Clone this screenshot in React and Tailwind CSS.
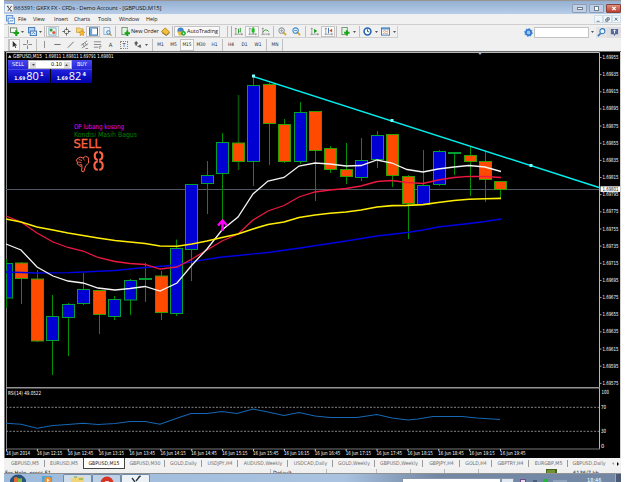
import clsx from 'clsx';

const MENU = [
    ['File', 'w-[15px]'],
    ['View', 'w-[21px]'],
    ['Insert', 'w-[20px]'],
    ['Charts', 'w-[24px]'],
    ['Tools', 'w-[21px]'],
    ['Window', 'w-[27px]'],
    ['Help', 'w-[20px]'],
];

const TIMEFRAMES = [
    ['M1', 'w-[13px]'],
    ['M5', 'w-[13px]'],
    ['M15', 'w-[14px]'],
    ['M30', 'w-[14px]'],
    ['H1', 'w-[13px]'],
    ['|', 'w-[3px]'],
    ['H4', 'w-[14px]'],
    ['D1', 'w-[13px]'],
    ['W1', 'w-[14px]'],
    ['|', 'w-[3px]'],
    ['MN', 'w-[14px]'],
];

const TABS = [
    ['GBPUSD,M5', 'w-[40px]'],
    ['EURUSD,M5', 'w-[38px]'],
    ['GBPUSD,M15', 'w-[42px]'],
    ['GBPUSD,M30', 'w-[40px]'],
    ['GOLD,Daily', 'w-[37px]'],
    ['USDJPY,H4', 'w-[36px]'],
    ['AUDUSD,Weekly', 'w-[50px]'],
    ['USDCAD,Daily', 'w-[45px]'],
    ['GOLD,Weekly', 'w-[42px]'],
    ['GBPUSD,Weekly', 'w-[48px]'],
    ['GBPJPY,H4', 'w-[37px]'],
    ['GOLD,H4', 'w-[32px]'],
    ['GBPTRY,H4', 'w-[37px]'],
    ['EURGBP,M5', 'w-[39px]'],
    ['GBPUSD,Daily', 'w-[42px]'],
];

// high, low, body top, body bottom, direction
const CANDLES = [
    [259, 308, 263.5, 298, 'up'],
    [262, 304, 263, 278.5, 'down'],
    [270, 342, 279, 341, 'down'],
    [295, 375, 316.5, 340.5, 'up'],
    [303, 356, 304.5, 317.5, 'up'],
    [273, 305, 289.5, 303.5, 'up'],
    [290, 334, 290.5, 314.5, 'down'],
    [296, 320, 299.5, 316.5, 'up'],
    [279, 315, 280.5, 300, 'up'],
    [263, 302, 278.5, 279.5, 'flat'],
    [271, 320, 276, 312.5, 'down'],
    [239.5, 316, 248.5, 313.5, 'up'],
    [184, 281, 184.5, 249.5, 'up'],
    [161, 214, 175.5, 183.5, 'up'],
    [133, 220, 142.5, 173.5, 'up'],
    [95, 170, 143, 161.5, 'down'],
    [76, 186, 85.5, 161.5, 'up'],
    [83, 165, 84.5, 123.5, 'down'],
    [119, 163, 124.5, 161.5, 'down'],
    [102, 164, 112.5, 161.5, 'up'],
    [111, 201, 111.5, 150.5, 'down'],
    [146, 173, 148.5, 169.5, 'down'],
    [143, 184, 169.5, 176.5, 'down'],
    [138, 181, 160.5, 177.5, 'up'],
    [131, 168, 135.5, 159.5, 'up'],
    [134, 187, 134.5, 175.5, 'down'],
    [175, 239, 176.5, 203.5, 'down'],
    [150, 205, 185.5, 204.5, 'up'],
    [150, 186, 151.5, 184.5, 'up'],
    [152, 175, 152.5, 153.5, 'flat'],
    [146, 196, 155.5, 161.5, 'down'],
    [151, 202, 161.5, 179.5, 'down'],
    [181, 198, 181.5, 189.5, 'down'],
];

const FILLS = { up: '#0000d2', down: '#ff4a00', flat: '#00a000' };

const WHITE_MA = '6,244 21,250 37,267 53,276 68,281 83,283 98,288 115,290 130,288.5 145,286.5 160,291 177,283 192,265 207,249 222,230 238,217 253,194 268,181 284,177.5 299,166 315,163 330,164 346,166 361,165.5 377,160 392,163 407,169.5 423,172 438,169 454,167 469,165.5 485,167 501,171.5';
const RED_MA = '6,216 21,222 37,233 53,242 68,247.5 83,251 98,257.5 115,261.5 130,263.5 145,264.5 160,269 177,267 192,259 207,250 222,241 238,234 253,220 268,211 284,205.5 299,197 315,192 330,190 346,188.5 361,186 377,181.5 392,180.5 407,182.5 423,183.5 438,180 454,177.5 469,176.3 485,176.5 501,177.5';
const YELLOW_MA = '6,219 21,222 37,227 53,230 68,233 83,235.5 98,238 115,240.5 130,242 145,243.5 160,246 177,246.3 192,244 207,241 222,237.5 238,234 253,229 268,224.5 284,222 299,217.5 315,215 330,213.3 346,212 361,210 377,207 392,205.6 407,205.4 423,204.6 438,202.5 454,200.5 469,199.3 485,198.7 501,198.4';
const BLUE_MA = '6,272 37,273 68,272.7 83,272 115,270.5 145,267.5 177,265 192,261.7 222,257 238,255.5 268,252.5 300,248 346,241 377,236 407,232.5 423,230 438,227 469,223.5 485,221.5 501,219';
const RSI = '6,423.3 21,424.3 37,428.3 53,425.5 68,424.5 83,423.3 98,424.5 115,423.5 130,421.5 145,421.5 160,424.3 176,418.5 191,413.5 207,413.5 222,411.5 237,413.5 253,409 268,412 284,415.5 299,412.5 315,416 330,417.5 357,417.5 377,414.5 392,418 408,420 418,419 433,416.5 462,416.5 477,418 500,419.5';

const TIMES = [
    '2014', '12:15', '12:45', '13:15', '13:45', '14:15', '14:45', '15:15', '15:45',
    '16:15', '16:45', '17:15', '17:45', '18:15', '18:45', '19:15', '19:45',
];

const PRICES = Array.from({ length: 20 }, (_, i) => (1.69955 - i * 0.0002).toFixed(5));

const Glyph = ({ children, className }) => (
    <svg viewBox="0 0 10 10" fill="none" className={clsx('w-[9px] h-[9px] shrink-0', className)}>
        {children}
    </svg>
);

const Cell = ({ w, on, children }) => (
    <div className={clsx('h-full flex items-center justify-center shrink-0', w, on && 'bg-[#f9f9f9] border border-[#c4c4c4]')}>
        {children}
    </div>
);

const Sep = () => (
    <div className="w-[3px] h-full flex justify-center shrink-0">
        <div className="w-px h-full bg-[#bdbdbd]" />
    </div>
);

const Caret = ({ w }) => (
    <div className={clsx('h-full flex items-center justify-center shrink-0', w)}>
        <svg viewBox="0 0 4 2" className="w-[3px] h-[2px]"><path d="M0 0H4L2 2Z" fill="#222" /></svg>
    </div>
);

// label squeezed or stretched to a fixed width
const Label = ({ children, ...props }) => (
    <text lengthAdjust="spacingAndGlyphs" xmlSpace="preserve" {...props}>{children}</text>
);

const Magnifier = ({ color, sign }) => (
    <Glyph>
        <path d="M6 6L9 9" stroke="#d9a520" strokeWidth="1.8" />
        <circle cx="4" cy="4" r="3" fill="#e4f2fb" stroke={color} strokeWidth="1.2" />
        <path d={sign === '+' ? 'M2.4 4H5.6M4 2.4V5.6' : 'M2.4 4H5.6'} stroke={color} />
    </Glyph>
);

const Axes = ({ children }) => (
    <Glyph>
        <path d="M2 1V9M0.5 8H9.5M1 2.5L2 1L3 2.5M8 7L9.5 8L8 9" stroke="#888" strokeWidth="0.8" />
        {children}
    </Glyph>
);

const TitleBar = () => (
    <div className="h-[14px] flex items-start border-t border-[#9b9390] bg-gradient-to-b from-[#94afd2] to-[#b8cee8]">
        <div className="w-[8px] h-[8px] mt-[3px] ml-px bg-[#eef2f6] flex items-center justify-center">
            <svg viewBox="0 0 8 8" className="w-[7px] h-[7px]" fill="none">
                <path d="M1.5 1.5L6 6.8M6.5 1L2 7M1 1.5H3M5 6.8H7" stroke="#333" />
            </svg>
        </div>
        <span className="ml-px mt-[2px] leading-[10px] text-[5.9px] tracking-[-0.16px] text-[#10151d] whitespace-nowrap w-[150px] font-['Open_Sans']">
            663391: GKFX FX - CFDs - Demo Account - [GBPUSD,M15]
        </span>
        <div className="flex-1" />
        <div className="flex gap-[2px] mt-[3px]">
            <div className="w-[15px] h-[9px] rounded-[1px] border border-[#8d9db3] bg-[#bfd0e5] flex items-center justify-center">
                <div className="w-[6px] h-[3px] border border-[#6f7c8f] bg-white" />
            </div>
            <div className="w-[15px] h-[9px] rounded-[1px] border border-[#8d9db3] bg-[#bfd0e5] flex items-center justify-center">
                <div className="w-[5px] h-[5px] border border-[#6f7c8f] bg-white" />
            </div>
            <div className="w-[15px] h-[9px] rounded-[1px] border border-[#8a4037] bg-gradient-to-b from-[#dc8e80] to-[#bd3f2c] flex items-center justify-center">
                <svg viewBox="0 0 6 6" className="w-[6px] h-[5px]"><path d="M1 1L5 5M5 1L1 5" stroke="#fff" strokeWidth="1.5" /></svg>
            </div>
        </div>
    </div>
);

const MenuBar = () => (
    <div className="h-[11px] flex items-center bg-[#f1f1f1] border-b border-[#cfcfcf]">
        <div className="w-[14px] flex justify-center pr-[2px]">
            <Glyph className="w-[8px] h-[8px]">
                <rect x="0.5" y="0.5" width="7" height="6" fill="#cfe2f6" stroke="#5c91cf" />
                <rect x="2.5" y="3.5" width="7" height="6" fill="#fff" stroke="#5c91cf" />
                <path d="M4 8L5 6L7 7L8 5" stroke="#4384c9" />
            </Glyph>
        </div>
        {MENU.map(([label, w]) => (
            <span key={label} className={clsx("text-[5.5px] leading-[9px] tracking-[-0.1px] text-[#1a1a1a] font-['Open_Sans']", w)}>{label}</span>
        ))}
        <div className="flex-1" />
        <div className="flex h-[8px] text-[#51657c]">
            {['M1 6H5', 'M1 3H4V6H1ZM3 3V1H6V4H4', 'M1 1L5 5M5 1L1 5'].map((d) => (
                <div key={d} className="w-[9px] border border-[#cfdfe8] bg-[#f0f6fa] flex items-center justify-center">
                    <svg viewBox="0 0 7 7" fill="none" className="w-[5px] h-[5px]"><path d={d} stroke="currentColor" strokeWidth="1.2" /></svg>
                </div>
            ))}
        </div>
    </div>
);

const MainToolbar = () => (
    <div className="h-[13px] pt-px flex items-center bg-[#f0f0f0]">
        <div className="flex h-[12px] w-[394px] border-b border-r border-[#d0d0d0]">
            <div className="w-[4px]" />
            <div className="w-px h-full bg-[#c4c4c4]" />
            <Cell w="w-[11px]">
                <Glyph>
                    <rect x="0.5" y="1" width="7" height="5" fill="#f4fff4" stroke="#667b66" />
                    <path d="M7 3.5V10M4 6.7H10" stroke="#16a316" strokeWidth="2.4" />
                </Glyph>
            </Cell>
            <Caret w="w-[5px]" />
            <div className="w-[2px]" />
            <Cell w="w-[10px]">
                <Glyph>
                    <rect x="0.5" y="0.5" width="7" height="6" fill="#b8d3ef" stroke="#3c76b5" />
                    <rect x="2.5" y="4.5" width="7" height="5" fill="#dbeaf8" stroke="#3c76b5" />
                    <path d="M4 8L6 6L8 8" stroke="#4a90d0" />
                </Glyph>
            </Cell>
            <Caret w="w-[6px]" />
            <Sep />
            <Cell w="w-[13px]" on>
                <Glyph>
                    <rect x="1" y="1" width="8" height="8" fill="#e6f5f2" stroke="#7dabc8" />
                    <circle cx="3.5" cy="3.5" r="1.5" fill="#28a428" />
                    <circle cx="6.5" cy="6.2" r="1.8" fill="#db6042" />
                </Glyph>
            </Cell>
            <Cell w="w-[15px]">
                <Glyph>
                    <circle cx="5" cy="5" r="2.6" stroke="#777" />
                    <path d="M5 0.5V3.5M5 6.5V9.5M0.5 5H3.5M6.5 5H9.5" stroke="#555" />
                </Glyph>
            </Cell>
            <Cell w="w-[12px]">
                <Glyph>
                    <path d="M0.5 1H4L5 2H8V6H0.5Z" fill="#f7d67a" stroke="#c98f21" strokeWidth="0.7" />
                    <path d="M6.5 3.5L7.5 5.5L9.8 5.8L8 7.3L8.5 9.6L6.5 8.4L4.5 9.6L5 7.3L3.2 5.8L5.5 5.5Z" fill="#ffbd32" stroke="#c88614" strokeWidth="0.7" />
                </Glyph>
            </Cell>
            <Cell w="w-[14px]" on>
                <Glyph>
                    <rect x="0.5" y="1" width="9" height="8" fill="#fff" stroke="#2867aa" strokeWidth="1.2" />
                    <rect x="1" y="2" width="2.5" height="7" fill="#69a5dc" />
                </Glyph>
            </Cell>
            <Cell w="w-[14px]">
                <Glyph>
                    <rect x="1" y="0.5" width="6.5" height="8" fill="#eef5fb" stroke="#8fb0cf" />
                    <circle cx="6" cy="6" r="2" fill="#d5ecfb" stroke="#3e7fb7" />
                    <path d="M7.5 7.5L9.5 9.5" stroke="#bb9030" strokeWidth="1.3" />
                </Glyph>
            </Cell>
            <Sep />
            <div className="flex items-center h-full w-[42px] pl-[4px] text-[5.5px] tracking-[-0.05px] font-['Open_Sans'] font-medium whitespace-nowrap text-[#101010]">
                <Glyph className="mr-[1px]">
                    <rect x="1" y="0.5" width="6" height="8" fill="#e7f5e7" stroke="#709070" />
                    <path d="M7 4V10M4 7H10" stroke="#15a515" strokeWidth="2.2" />
                </Glyph>
                New Order
            </div>
            <Cell w="w-[12px]">
                <Glyph>
                    <path d="M0.5 5L4.5 1L9.5 5.5L6 9Z" fill="#f2bf3d" stroke="#ba841b" />
                    <path d="M1 6.2L6 9.5L9.5 6.5" stroke="#8b6725" />
                </Glyph>
            </Cell>
            <Sep />
            <div className="flex items-center h-full w-[46px] pl-[2px] text-[5.4px] font-['Open_Sans'] font-medium whitespace-nowrap text-[#101010] bg-[#f9f9f9] border border-[#c4c4c4]">
                <Glyph className="mr-[1px]">
                    <circle cx="4" cy="4" r="3.5" fill="#4285c8" />
                    <path d="M0.5 5H7L6 9.5H2Z" fill="#e8b844" />
                    <circle cx="7.2" cy="7" r="2.6" fill="#1eb030" />
                    <path d="M6.5 5.7L8.5 7L6.5 8.3Z" fill="#fff" />
                </Glyph>
                AutoTrading
            </div>
            <div className="w-[6px]" />
            <Sep />
            <div className="w-[2px]" />
            <div className="w-px bg-[#aaa]" />
            <Cell w="w-[13px]"><Axes><path d="M5 2V7M7 1V6M5 5H6" stroke="#249b24" /></Axes></Cell>
            <Cell w="w-[14px]" on><Axes><path d="M5.7 0V8" stroke="#109010" /><rect x="4" y="1.5" width="3.4" height="4.5" fill="#22bd22" /></Axes></Cell>
            <Cell w="w-[13px]"><Axes><path d="M2 6Q5 1 8.5 5" stroke="#249b24" /></Axes></Cell>
            <Sep />
            <Cell w="w-[14px]"><Magnifier color="#9a9a9a" sign="+" /></Cell>
            <Cell w="w-[14px]"><Magnifier color="#3e89c9" sign="-" /></Cell>
            <div className="w-px" />
            <Sep />
            <Cell w="w-[14px]"><Axes><path d="M4.5 2L8 4.5L4.5 7Z" fill="#18a018" /></Axes></Cell>
            <Cell w="w-[14px]" on><Axes><path d="M5 1V7" stroke="#326ca8" /><path d="M6 4L9 2V6Z" fill="#cf4b26" /></Axes></Cell>
            <Sep />
            <div className="w-[2px]" />
            <Cell w="w-[11px]">
                <Glyph>
                    <rect x="1" y="0.5" width="6" height="8" fill="#e7f5e7" stroke="#709070" />
                    <path d="M6.5 3.5V9.5M3.5 6.5H9.5" stroke="#15a515" strokeWidth="2.2" />
                </Glyph>
            </Cell>
            <Caret w="w-[6px]" />
            <div className="w-px" />
            <Sep />
            <Cell w="w-[12px]">
                <Glyph>
                    <circle cx="5" cy="5" r="3.8" fill="#fff" stroke="#1e65b5" strokeWidth="1.7" />
                    <path d="M5 2.5V5L7 5.5" stroke="#444" />
                </Glyph>
            </Cell>
            <Caret w="w-[6px]" />
            <Cell w="w-[13px]">
                <Glyph>
                    <rect x="0.5" y="1" width="9" height="8" fill="#fff" stroke="#3974ac" />
                    <path d="M1 2H9" stroke="#4f91d0" strokeWidth="1.6" />
                    <path d="M2 5L4 4L6 5L8 4M2 7.5L4 6.5L6 7.5L8 6.5" stroke="#c06b3c" strokeWidth="0.8" />
                </Glyph>
            </Cell>
            <Caret w="w-[5px]" />
        </div>
        <div className="flex-1" />
        <div className="flex h-[11px] items-center">
            <Cell w="w-[11px]">
                <Glyph className="w-[8px] h-[8px]">
                    <circle cx="5" cy="5" r="3" fill="#9cc4ee" stroke="#2777d0" strokeWidth="1.8" />
                    <circle cx="5" cy="5" r="4.3" stroke="#2777d0" strokeWidth="1.1" strokeDasharray="1.6 1.7" />
                </Glyph>
            </Cell>
            <div className="w-[55px] h-full bg-white border border-[#c2c2c2]" />
            <Caret w="w-[7px]" />
            <div className="w-[11px] h-full flex items-center justify-center bg-[#e4e4e4]">
                <Glyph className="w-[8px] h-[8px]">
                    <circle cx="6" cy="3.5" r="2.8" fill="#e8f4ff" stroke="#3778be" strokeWidth="1.2" />
                    <path d="M4 6L1 9" stroke="#3778be" strokeWidth="1.8" />
                </Glyph>
            </div>
            <div className="w-[14px] h-full flex items-center justify-center bg-[#dedede]">
                <Glyph>
                    <path d="M1 1H9V7H6L5 9L4 7H1Z" fill="#51679b" />
                    <path d="M5 2V6M3.7 3.5L5 2L6.3 3.5" stroke="#fff" />
                </Glyph>
            </div>
        </div>
    </div>
);

const LineToolbar = () => (
    <div className="h-[13px] flex items-center bg-[#f0f0f0]">
        <div className="flex h-[12px] border-r border-[#c0c0c0]">
            <div className="w-[4px]" />
            <div className="w-px bg-[#c4c4c4]" />
            <Cell w="w-[11px]" on><Glyph><path d="M3 1V8L4.7 6.5L6 9L7 8.5L5.8 6H8Z" fill="#333" /></Glyph></Cell>
            <Cell w="w-[15px]"><Glyph><path d="M5 0V4M5 6V10M0 5H4M6 5H10" stroke="#777" /></Glyph></Cell>
            <Sep />
            <Cell w="w-[13px]"><Glyph><path d="M5 1V9" stroke="#888" /></Glyph></Cell>
            <Cell w="w-[13px]"><Glyph><path d="M1.5 5H8.5" stroke="#666" /></Glyph></Cell>
            <Cell w="w-[13px]"><Glyph><path d="M2 8.5L8.5 2" stroke="#666" /></Glyph></Cell>
            <Cell w="w-[14px]"><Glyph><path d="M1 6L8 1M2 9L9 4M3 4L5 8M5.5 3L7.5 6M6 9.5H9" stroke="#777" strokeWidth="0.9" /></Glyph></Cell>
            <Cell w="w-[13px]"><Glyph><path d="M1 2H9M1 5H9M1 8H6M7.5 7V10M7.5 7H9.5" stroke="#777" strokeWidth="0.9" /></Glyph></Cell>
            <Cell w="w-[13px]"><span className="text-[6px] text-[#444]">A</span></Cell>
            <Cell w="w-[14px]">
                <span className="w-[8px] h-[8px] border border-dotted border-[#888] text-[5.5px] leading-[6px] text-center text-[#333]">T</span>
            </Cell>
            <Cell w="w-[13px]"><Glyph><path d="M1 4L3.5 1L6 4H4.5V6H2.5V4ZM6 6L9 5L8 9Z" fill="#555" /><path d="M5 7L9 8" stroke="#555" /></Glyph></Cell>
            <Caret w="w-[5px]" />
            <div className="w-[2px]" />
            <Sep />
            {TIMEFRAMES.map(([label, w], i) =>
                label === '|' ? (
                    <Sep key={i} />
                ) : (
                    <Cell key={label} w={w} on={label === 'M15'}>
                        <span className="text-[4.8px] text-[#222]">{label}</span>
                    </Cell>
                )
            )}
        </div>
    </div>
);

const OneClickPanel = () => (
    <div className="absolute left-[4px] top-[9px] w-[84px] text-white">
        <div className="flex h-[9px] items-stretch text-[5.5px] leading-[9px] text-center">
            <div className="w-[20px] bg-gradient-to-b from-[#4747f0] to-[#2525d8]">SELL</div>
            <div className="w-[44px] h-[9px] bg-white flex items-center border border-[#b9b9b9] px-px text-black">
                <div className="w-[6px] h-[6px] bg-[#ddd] flex items-center"><Caret w="w-[6px]" /></div>
                <span className="flex-1 text-right pr-[2px]">0.10</span>
                <div className="w-[6px] h-[6px] bg-[#ddd] flex items-center rotate-180"><Caret w="w-[6px]" /></div>
            </div>
            <div className="flex-1 bg-gradient-to-b from-[#4747f0] to-[#2525d8]">BUY</div>
        </div>
        <div className="flex gap-px h-[14px]">
            {[['80', '1'], ['82', '4']].map(([big, pip]) => (
                <div key={big} className="flex-1 flex items-end justify-center pb-[2px] bg-gradient-to-b from-[#1f1fdc] to-[#0000a8] border-t border-[#4545e5]">
                    <span className="text-[5px] leading-[6px] font-bold">1.69</span>
                    <span className="text-[11px] leading-[10px] ml-px font-['Open_Sans']">{big}</span>
                    <span className="text-[5.5px] leading-[6px] mb-[4px] ml-px font-bold">{pip}</span>
                </div>
            ))}
        </div>
    </div>
);

const Chart = () => (
    <div className="relative h-[407px] bg-black">
        <svg viewBox="4 51 617 407" className="block w-[617px] h-[407px]" fontFamily="'DejaVu Sans Condensed', 'DejaVu Sans', sans-serif">
            <rect x="4" y="51" width="617" height="407" fill="#000" />
            <path d="M4 51.5H621" stroke="#6a6a6a" />
            <path d="M4.5 51V458" stroke="#777" />
            <path d="M6.5 52V449" stroke="#888" />
            <path d="M6 52.5H599.5V449" stroke="#b8b8b8" fill="none" />
            <path d="M620.5 52V458" stroke="#d0d0d0" />
            <path d="M6 387.7H600" stroke="#949494" strokeWidth="1.6" />
            <path d="M6 449H600" stroke="#777" />
            <path d="M478 52.5H482L480 55Z" fill="#9eb4cb" />

            <path d="M6 189.5H599" stroke="#4f5864" />

            {CANDLES.map(([high, low, top, bottom, dir], i) => {
                const x = Math.round(6 + i * 15.45) + 0.5;
                const left = i === 0 ? 6.5 : x - 6;
                return (
                    <g key={i} stroke={i === 15 ? '#0b4f0b' : '#009000'}>
                        <path d={`M${x} ${high}V${low}`} strokeWidth={i === 15 ? 1.7 : 1} />
                        <rect x={left} y={top} width={x + 6 - left} height={bottom - top} fill={FILLS[dir]} stroke={dir === 'down' ? '#2fa000' : '#00a032'} />
                    </g>
                );
            })}

            <g fill="none" strokeWidth="1.3">
                <polyline points={BLUE_MA} stroke="#0000e6" />
                <polyline points={RED_MA} stroke="#ee1740" />
                <polyline points={WHITE_MA} stroke="#f4f4f4" />
                <polyline points={YELLOW_MA} stroke="#ffee00" strokeWidth="1.6" />
                <path d="M253.5 76.5L599 187.5" stroke="#00f0f0" strokeWidth="1.4" />
            </g>
            {[[253.5, 76], [392, 120.5], [531, 165.5]].map(([x, y]) => (
                <rect key={x} x={x - 1.5} y={y - 1.5} width="3" height="3" fill="#7dffff" />
            ))}
            <path d="M222.5 231V221M218 225.5L222.5 220.5L227 225.5" stroke="#f0f" strokeWidth="2.4" fill="none" />

            <path d="M8 57.8L9.8 55L11.5 57.8Z" fill="#ddd" />
            <Label x="13" y="58.3" fontSize="5.6" fill="#fff" textLength="29">GBPUSD,M15</Label>
            <Label x="45" y="58.3" fontSize="5.6" fill="#fff" textLength="68.5">1.69811 1.69811 1.69791 1.69801</Label>

            <Label x="74" y="129" fontSize="6.8" fill="#f000f0" textLength="50">OP lubang kosong</Label>
            <Label x="74" y="136.8" fontSize="7.2" fill="#008400" textLength="63">Kondisi Masih Bagus</Label>
            <Label x="73.5" y="147.6" fontSize="12.5" fill="#ff6347" stroke="#ff6347" strokeWidth="0.3" textLength="27.5">SELL</Label>

            {/* thumbs down + pip digit */}
            <g fill="none" stroke="#ff6347" strokeWidth="1">
                <path d="M77 159L80 157L83 158L85.5 156.3L88.3 157.5L88.6 163L85.5 166L83.8 171.8L81.6 171.2L82 165.5L80 166.3L78.6 164.8L77.2 164L77.5 162L76.3 160.8Z" />
                <path d="M79 159.5L82 160.5M78 162L81.5 162.5M79.5 164.5L82 164.3M83 158L84.5 160.5" strokeWidth="0.8" />
            </g>
            <g fill="none" stroke="#ff6347" strokeWidth="2.1">
                <path d="M97.8 152Q94.6 152.4 94.7 156T97.8 160M99.2 152Q102.5 152.4 102.4 156T99.2 160" />
                <path d="M97.8 161.5Q94.3 161.9 94.4 165.7T97.8 169.8M99.2 161.5Q102.8 161.9 102.7 165.7T99.2 169.8" />
            </g>

            {PRICES.map((p, i) => (
                <g key={p}>
                    <path d={`M600 ${57.5 + i * 17.15}H601.5`} stroke="#aaa" />
                    <Label x="602.5" y={59 + i * 17.15} fontSize="5.6" fill="#fff" textLength="16">{p}</Label>
                </g>
            ))}
            <rect x="600.5" y="186.3" width="19.5" height="5.6" fill="#fff" />
            <Label x="602.5" y="191.2" fontSize="5.6" fill="#000" textLength="16">1.69801</Label>

            <Label x="8" y="395.2" fontSize="5.6" fill="#fff" textLength="33">RSI(14) 49.0522</Label>
            <path d="M6 407.3H599M6 431.3H599" stroke="#858585" strokeDasharray="2 1.5" />
            <polyline points={RSI} fill="none" stroke="#1567b4" strokeWidth="1.1" />
            <g fontSize="5.6" fill="#fff">
                <Label x="601.5" y="394.2" textLength="7.5">100</Label>
                <Label x="601" y="408.7" textLength="5.2">70</Label>
                <Label x="601" y="433.2" textLength="5.2">30</Label>
                <text x="601" y="447.7">0</text>
            </g>

            {TIMES.map((t, i) => (
                <g key={t}>
                    <path d={`M${6.5 + i * 30.88} 449V451`} stroke="#ccc" />
                    <Label x={6 + i * 30.88} y="455.2" fontSize="5.4" fill="#fff" textLength={i === 0 ? 24 : 25.5}>16 Jun {t}</Label>
                </g>
            ))}
        </svg>
        <OneClickPanel />
    </div>
);

const ChartTabs = () => (
    <div className="h-[11px] flex items-stretch bg-[#f2f2f2] text-[5.2px] leading-[10px] text-[#6c6c6c] whitespace-nowrap">
        <div className="w-px" />
        {TABS.map(([label, w], i) => (
            <div
                key={label}
                className={clsx(
                    'relative text-center shrink-0',
                    w,
                    i === 2 && 'bg-white text-[#111] border border-t-0 border-[#444]'
                )}
            >
                {label}
                {i !== 1 && i !== 2 && i !== 14 && <div className="absolute right-0 top-[2px] w-px h-[7px] bg-[#999]" />}
            </div>
        ))}
        <div className="flex-1 flex items-center justify-around text-[#222]">
            <svg viewBox="0 0 2 4" className="w-[2px] h-[3px]"><path d="M2 0V4L0 2Z" fill="#888" /></svg>
            <svg viewBox="0 0 2 4" className="w-[2px] h-[4px]"><path d="M0 0V4L2 2Z" fill="#000" /></svg>
        </div>
    </div>
);

const StatusBar = () => (
    <div className="h-[5px] overflow-hidden flex bg-[#f0f0f0] border-b border-[#929292] text-[5.7px] leading-[8px] text-[#111] whitespace-nowrap">
        <div className="w-[267px] pl-[1px] border-r border-[#bbb] shrink-0">For Help, press F1</div>
        <div className="w-[56px] pl-[2px] border-r border-[#bbb] shrink-0">Default</div>
        <div className="w-[50px] border-r border-[#bbb] shrink-0" />
        <div className="w-[34px] border-r border-[#bbb] shrink-0" />
        <div className="w-[34px] border-r border-[#bbb] shrink-0" />
        <div className="w-[34px] border-r border-[#bbb] shrink-0" />
        <div className="w-[67px] shrink-0" />
        <svg viewBox="0 0 11 4" className="w-[11px] h-[4px] shrink-0">
            <path d="M0 0H11V4H0Z" fill="#47621d" />
            <path d="M2 1V4M4 1V4M6 1V4M8 1V4" stroke="#9dc34a" />
        </svg>
        <div className="pl-[16px]">6136/7 kb</div>
    </div>
);

const TaskBar = () => (
    <div className="h-[8px] flex items-stretch overflow-hidden bg-gradient-to-r from-[#9fbbdc] from-0% via-[#a9c3e0] via-55% to-[#7388a5] to-70%">
        <div className="w-[27px] flex justify-center">
            <svg viewBox="0 0 16 8" className="w-[16px] h-[8px]">
                <circle cx="8" cy="9" r="8.5" fill="#28547c" />
                <path d="M4 8V4Q6 2 8 4V8Z" fill="#e06b34" />
                <path d="M8 8V4Q10 5 12 4V8Z" fill="#83bb3e" />
            </svg>
        </div>
        <div className="w-[32px] flex items-center justify-center">
            <svg viewBox="0 0 14 7" className="w-[12px] h-[6px] mt-[2px]">
                <rect x="1" width="12" height="8" rx="1" fill="#4ca7e0" />
                <circle cx="8" cy="5" r="4" fill="#f08f2d" />
                <path d="M7 3L10 5L7 7Z" fill="#fff" />
            </svg>
        </div>
        <div className="w-[29px] border border-b-0 border-[#6f8ba9] bg-[#cfddeb] rounded-t-[2px] flex justify-center">
            <svg viewBox="0 0 16 7" className="w-[16px] h-[7px]">
                <path d="M1 7V3H6L7 2H14V7Z" fill="#f0d477" />
                <path d="M4 2H7M9 4H13" stroke="#63a743" />
            </svg>
        </div>
        <div className="w-[29px] border border-b-0 border-[#6f8ba9] bg-[#bdd0e5] rounded-t-[2px] flex justify-center">
            <svg viewBox="0 0 14 7" className="w-[14px] h-[7px]">
                <circle cx="7" cy="8" r="6.5" fill="#d83423" />
                <circle cx="7" cy="9" r="3" fill="#eee" />
            </svg>
        </div>
        <div className="w-[29px] border border-b-0 border-[#6f8ba9] bg-[#edf2f7] rounded-t-[2px] flex justify-center">
            <svg viewBox="0 0 12 7" className="w-[12px] h-[7px]"><path d="M2 3L5 7M10 1L6 6M8 2L11 1" stroke="#26323d" strokeWidth="1.3" /></svg>
        </div>
        <div className="flex-1 flex items-end justify-end">
            <div className="w-[99px] h-[4px] bg-white border border-b-0 border-[#8796aa]" />
            <div className="w-[13px] h-[4px] bg-[#e2eaf3] border border-b-0 border-[#8796aa]" />
        </div>
        <div className="w-[107px] flex items-end pl-[6px]">
            <div className="w-[6px] h-[3px] bg-[#ead9ee] border border-b-0 border-[#704b87]" />
            <div className="w-[4px] h-[2px] bg-[#4a5f7c] ml-[7px]" />
            <div className="w-[5px] h-[3px] bg-[#28b43c] ml-[6px]" />
            <div className="w-[14px] h-[2px] bg-[#8fa3bc] ml-[5px]" />
            <span className="ml-[20px] self-start mt-[2px] text-[5.6px] leading-[8px] text-white">18:46</span>
            <div className="flex-1" />
            <div className="w-[6px] h-[8px] border-l border-[#9cabbf] bg-[#4a5b73]" />
        </div>
    </div>
);

export default function App() {
    return (
        <div className="w-[625px] h-[482px] px-[4px] bg-white overflow-hidden font-['DejaVu_Sans_Condensed','DejaVu_Sans',sans-serif]">
            <TitleBar />
            <MenuBar />
            <MainToolbar />
            <LineToolbar />
            <Chart />
            <ChartTabs />
            <StatusBar />
            <TaskBar />
        </div>
    );
}
